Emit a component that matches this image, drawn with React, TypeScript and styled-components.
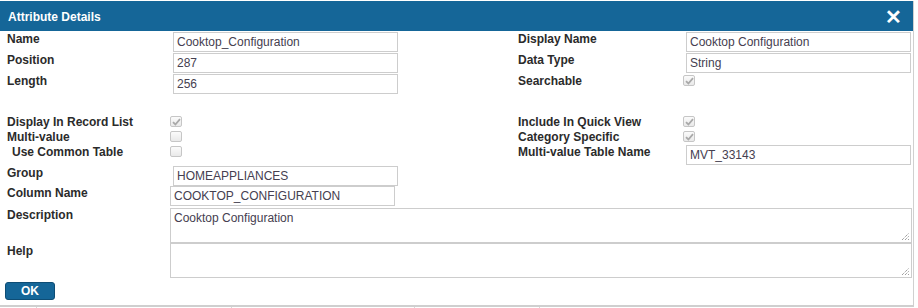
import React from "react";
import styled, { createGlobalStyle } from "styled-components";

const Global = createGlobalStyle`
  html, body { margin: 0; padding: 0; background: #fff; }
  body { font-family: Arial, "Liberation Sans", sans-serif; }
`;

const Page = styled.div`
  width: 918px;
  height: 308px;
  position: relative;
  overflow: hidden;
  background: #fff;
`;

const Dialog = styled.div`
  width: 914px;
  margin-top: 1px;
  border-right: 1px solid #d0d0d0;
  border-bottom: 2px solid #cfcfcf;
  background: #fff;
  box-sizing: border-box;
`;

const Header = styled.div`
  height: 30px;
  background: #156698;
  display: flex;
  align-items: center;
  justify-content: space-between;
  padding: 0 11px 0 8px;
`;

const Title = styled.div`
  color: #fff;
  font-weight: bold;
  font-size: 12px;
  margin-top: 1px;
`;

const Close = styled.div`
  color: #fff;
  font-weight: bold;
  font-size: 20px;
  line-height: 20px;
  margin-top: 1px;
`;

const Body = styled.div`
  padding: 1px 0 5px 0;
  display: flex;
  flex-direction: column;
`;

const Row = styled.div<{ $h: number; $mt?: number }>`
  display: grid;
  grid-template-columns: 170px 348px 165px 1fr;
  height: ${(p) => p.$h}px;
  margin-top: ${(p) => p.$mt ?? 0}px;
`;

const Label = styled.div<{ $indent?: number; $top?: number }>`
  font-family: Arial, "Liberation Sans", sans-serif;
  font-weight: bold;
  font-size: 12px;
  line-height: 14px;
  color: #2b2b2b;
  padding-left: ${(p) => p.$indent ?? 7}px;
  margin-top: ${(p) => p.$top ?? 0}px;
  white-space: nowrap;
`;

const RightLabel = styled(Label)`
  padding-left: 0;
`;

const Cell = styled.div<{ $span?: number }>`
  grid-column: span ${(p) => p.$span ?? 1};
`;

const Input = styled.div<{ $shift?: number }>`
  width: 225px;
  height: 20px;
  box-sizing: border-box;
  border: 1px solid #cdcdcd;
  margin-left: ${(p) => p.$shift ?? 3}px;
  font-size: 12px;
  line-height: 18px;
  padding-left: 3px;
  color: #454050;
  background: #fff;
`;

const TextArea = styled.div`
  position: relative;
  height: 35px;
  box-sizing: border-box;
  border: 1px solid #cdcdcd;
  font-size: 12px;
  line-height: 14px;
  padding: 2px 3px;
  color: #454050;
  margin-right: 1px;
`;

const Grip = styled.svg`
  position: absolute;
  right: 1px;
  bottom: 1px;
`;

const Check = styled.div<{ $top?: number }>`
  width: 12px;
  height: 11px;
  box-sizing: border-box;
  border: 1px solid #c6c6c6;
  border-radius: 2px;
  background: linear-gradient(#fbfbfb, #e9e9e9);
  margin-top: ${(p) => p.$top ?? 0}px;
  display: flex;
  align-items: center;
  justify-content: center;
`;

const OkButton = styled.div`
  width: 50px;
  height: 18px;
  margin: 4px 0 0 5px;
  box-sizing: border-box;
  background: #156698;
  border: 1px solid #0e4d75;
  border-radius: 3px;
  color: #fff;
  font-weight: bold;
  font-size: 12px;
  line-height: 16px;
  text-align: center;
`;

const BgLines = styled.div`
  display: grid;
  grid-template-columns: 37px 195px 183px 125px 1fr;
  height: 2px;
`;

const Tick = styled.div`
  border-right: 1px solid #d8d8d8;
`;

const CheckBox = ({ checked, top }: { checked?: boolean; top?: number }) => (
  <Check $top={top}>
    {checked && (
      <svg width="9" height="8" viewBox="0 0 9 8">
        <path d="M1 4.2 L3.4 6.5 L8 1.2" stroke="#a9a9a9" strokeWidth="1.8" fill="none" />
      </svg>
    )}
  </Check>
);

const Resize = () => (
  <Grip width="9" height="9" viewBox="0 0 9 9">
    <path d="M1 8 L8 1 M4 8 L8 4 M7 8 L8 7" stroke="#777" strokeWidth="1" strokeDasharray="1 1" />
  </Grip>
);

export default function App() {
  return (
    <Page>
      <Global />
      <Dialog>
        <Header>
          <Title>Attribute Details</Title>
          <Close>✕</Close>
        </Header>
        <Body>
          <Row $h={21}>
            <Label>Name</Label>
            <Cell><Input>Cooktop_Configuration</Input></Cell>
            <RightLabel>Display Name</RightLabel>
            <Cell><Input>Cooktop Configuration</Input></Cell>
          </Row>
          <Row $h={21}>
            <Label>Position</Label>
            <Cell><Input>287</Input></Cell>
            <RightLabel>Data Type</RightLabel>
            <Cell><Input>String</Input></Cell>
          </Row>
          <Row $h={21}>
            <Label>Length</Label>
            <Cell><Input>256</Input></Cell>
            <RightLabel>Searchable</RightLabel>
            <Cell><CheckBox checked top={1} /></Cell>
          </Row>
          <Row $h={15} $mt={20}>
            <Label>Display In Record List</Label>
            <Cell><CheckBox checked top={1} /></Cell>
            <RightLabel>Include In Quick View</RightLabel>
            <Cell><CheckBox checked top={1} /></Cell>
          </Row>
          <Row $h={15}>
            <Label>Multi-value</Label>
            <Cell><CheckBox top={1} /></Cell>
            <RightLabel>Category Specific</RightLabel>
            <Cell><CheckBox checked top={1} /></Cell>
          </Row>
          <Row $h={21}>
            <Label $indent={12}>Use Common Table</Label>
            <Cell><CheckBox top={1} /></Cell>
            <RightLabel>Multi-value Table Name</RightLabel>
            <Cell><Input>MVT_33143</Input></Cell>
          </Row>
          <Row $h={20}>
            <Label>Group</Label>
            <Cell><Input>HOMEAPPLIANCES</Input></Cell>
          </Row>
          <Row $h={22}>
            <Label>Column Name</Label>
            <Cell><Input $shift={0}>COOKTOP_CONFIGURATION</Input></Cell>
          </Row>
          <Row $h={35}>
            <Label>Description</Label>
            <Cell $span={3}>
              <TextArea>
                Cooktop Configuration
                <Resize />
              </TextArea>
            </Cell>
          </Row>
          <Row $h={35}>
            <Label $top={1}>Help</Label>
            <Cell $span={3}>
              <TextArea>
                <Resize />
              </TextArea>
            </Cell>
          </Row>
          <OkButton>OK</OkButton>
        </Body>
      </Dialog>
      <BgLines>
        <Tick />
        <Tick />
        <Tick />
        <Tick />
        <div />
      </BgLines>
    </Page>
  );
}
